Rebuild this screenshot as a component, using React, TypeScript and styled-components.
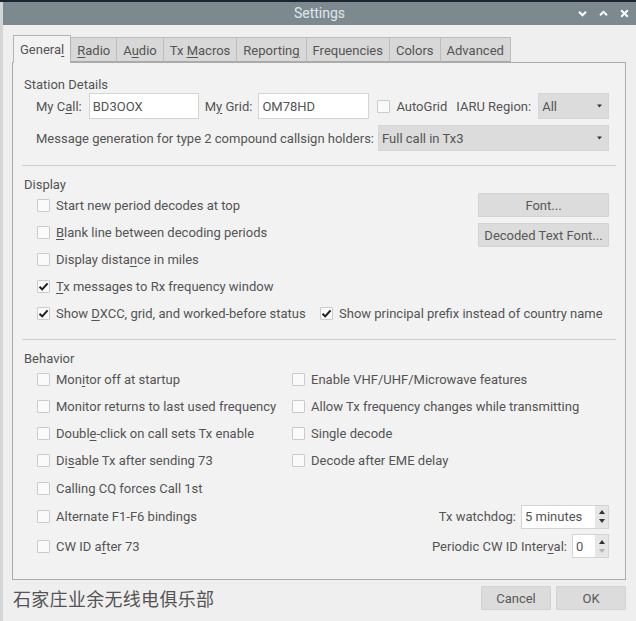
import React from 'react';
import styled, { createGlobalStyle } from 'styled-components';

const Global = createGlobalStyle`
  html, body { margin: 0; padding: 0; background: #d4d6d6; }
  body { font-family: Roboto, "Noto Sans", sans-serif; font-size: 13px; color: #545454; }
  * { box-sizing: border-box; }
  u { text-decoration-thickness: 1px; text-underline-offset: 2px; }
`;

const Desktop = styled.div`
  width: 636px;
  height: 621px;
  overflow: hidden;
  border-top: 2px solid #1c2431;
  padding-left: 3px;
  background: #d4d6d6;
`;

const Window = styled.div`
  height: 619px;
  background: #efefef;
  display: flex;
  flex-direction: column;
`;

const TitleBar = styled.div`
  height: 23px;
  flex: none;
  background: #7c8a90;
  display: grid;
  grid-template-columns: 1fr auto 1fr;
  align-items: center;
  color: #e0e6e8;
  font-size: 14px;
`;

const TitleText = styled.div`
  grid-column: 2;
  line-height: 23px;
`;

const Controls = styled.div`
  grid-column: 3;
  justify-self: end;
  display: flex;
  align-items: center;
  gap: 12px;
  padding-right: 7px;
`;

const Body = styled.div`
  flex: 1;
  display: flex;
  flex-direction: column;
  padding: 10px 10px 0 9px;
`;

const TabBar = styled.div`
  display: flex;
  align-items: flex-end;
  height: 27px;
  padding-left: 1px;
  position: relative;
  z-index: 1;
`;

const Tab = styled.div<{ $active?: boolean }>`
  height: ${p => (p.$active ? '28px' : '25px')};
  margin-bottom: ${p => (p.$active ? '-1px' : '0')};
  padding: 0 6px;
  display: flex;
  align-items: center;
  justify-content: center;
  white-space: nowrap;
  background: ${p => (p.$active ? '#f2f2f2' : '#d8d8d8')};
  border: 1px solid ${p => (p.$active ? '#b4b4b4' : '#bcbcbc')};
  border-bottom: ${p => (p.$active ? 'none' : '1px solid #aaaaaa')};
  border-left: ${p => (p.$active ? '1px solid #b4b4b4' : 'none')};
  color: #545454;
  padding-top: ${p => (p.$active ? '0' : '1px')};
`;

const Pane = styled.div`
  height: 518px;
  border: 1px solid #ababab;
  background: #f2f2f2;
  padding: 14px 16px 0 11px;
  display: flex;
  flex-direction: column;
`;

const SectionTitle = styled.div<{ $mt?: number }>`
  height: 16px;
  line-height: 16px;
  margin-top: ${p => p.$mt ?? 0}px;
`;

const FieldRow = styled.div<{ $mt?: number }>`
  display: flex;
  align-items: center;
  height: 26px;
  padding-left: 12px;
  margin-top: ${p => p.$mt ?? 0}px;
`;

const Label = styled.span<{ $ml?: number; $mr?: number }>`
  margin-left: ${p => p.$ml ?? 0}px;
  margin-right: ${p => p.$mr ?? 0}px;
  white-space: nowrap;
`;

const TextInput = styled.div<{ $w: number }>`
  width: ${p => p.$w}px;
  height: 26px;
  background: #ffffff;
  border: 1px solid #d4d4d4;
  display: flex;
  align-items: center;
  padding-left: 3px;
`;

const Combo = styled.div<{ $ml?: number }>`
  flex: 1;
  height: 26px;
  margin-left: ${p => p.$ml ?? 0}px;
  background: #dcdcdc;
  border: 1px solid #d6d6d6;
  display: flex;
  align-items: center;
  justify-content: space-between;
  padding: 0 6px 0 3px;
`;

const Separator = styled.div<{ $mt: number }>`
  height: 1px;
  background: #cfcfcf;
  margin: ${p => p.$mt}px -7px 0 -2px;
  flex: none;
`;

const BoxBase = styled.span<{ $ml?: number }>`
  width: 13px;
  height: 13px;
  flex: none;
  border: 1px solid #cbcbcb;
  background: #fafafa;
  border-radius: 1px;
  display: inline-flex;
  align-items: center;
  justify-content: center;
  margin-left: ${p => p.$ml ?? 0}px;
`;

const CheckRow = styled.div<{ $h?: number }>`
  display: flex;
  align-items: center;
  gap: 6px;
  height: ${p => p.$h ?? 27}px;
  white-space: nowrap;
`;

const DisplayGrid = styled.div`
  display: grid;
  grid-template-columns: 1fr 131px;
  margin-top: -1px;
  padding-left: 13px;
`;

const Column = styled.div`
  display: flex;
  flex-direction: column;
`;

const ButtonStack = styled.div`
  display: flex;
  flex-direction: column;
  gap: 6px;
  padding-top: 1px;
`;

const PushButton = styled.div<{ $w?: number }>`
  height: 24px;
  width: ${p => (p.$w ? `${p.$w}px` : 'auto')};
  background: #dcdcdc;
  border: 1px solid #d2d2d2;
  border-radius: 1px;
  display: flex;
  align-items: center;
  justify-content: center;
  color: #585858;
`;

const PairRow = styled.div`
  display: grid;
  grid-template-columns: 283px 1fr;
  padding-left: 13px;
`;

const BehaviorGrid = styled.div`
  display: grid;
  grid-template-columns: 255px 1fr;
  grid-template-rows: 27px 27px 27px 27px 28px 29px 30px;
  margin-top: -1px;
  padding-left: 13px;
`;

const SpinCell = styled.div`
  display: flex;
  align-items: center;
  justify-content: flex-end;
  gap: 5px;
`;

const Spin = styled.div<{ $w: number }>`
  width: ${p => p.$w}px;
  height: 24px;
  display: flex;
  border: 1px solid #d4d4d4;
  background: #ffffff;
`;

const SpinValue = styled.div`
  flex: 1;
  display: flex;
  align-items: center;
  padding-left: 3px;
`;

const SpinArrows = styled.div`
  width: 13px;
  background: #e6e6e6;
  display: flex;
  flex-direction: column;
  align-items: center;
  justify-content: space-around;
  padding: 2px 0;
`;

const Footer = styled.div`
  height: 41px;
  display: flex;
  align-items: center;
  justify-content: space-between;
  padding-bottom: 5px;
`;

const ClubName = styled.div`
  font-family: "Noto Sans CJK SC", "Noto Sans", sans-serif;
  font-size: 18px;
  color: #545454;
  padding-left: 1px;
  letter-spacing: 0.3px;
`;

const FooterButtons = styled.div`
  display: flex;
  gap: 5px;
`;

const CheckMark = () => (
  <svg width="11" height="11" viewBox="0 0 11 11">
    <path d="M1.5 5.8 L4.2 8.4 L9.6 2.4" fill="none" stroke="#1e1e1e" strokeWidth="2" />
  </svg>
);

const Box = ({ checked, ml }: { checked?: boolean; ml?: number }) => (
  <BoxBase $ml={ml}>{checked && <CheckMark />}</BoxBase>
);

const Check = ({ checked, children, h }: { checked?: boolean; children: React.ReactNode; h?: number }) => (
  <CheckRow $h={h}>
    <Box checked={checked} />
    <span>{children}</span>
  </CheckRow>
);

const DropArrow = () => (
  <svg width="5" height="4" viewBox="0 0 5 4">
    <path d="M0 0.5 L5 0.5 L2.5 3.5 Z" fill="#333" />
  </svg>
);

const SpinUp = ({ dim }: { dim?: boolean }) => (
  <svg width="6" height="4" viewBox="0 0 6 4">
    <path d="M0 4 L6 4 L3 0 Z" fill={dim ? '#aaa' : '#333'} />
  </svg>
);
const SpinDown = ({ dim }: { dim?: boolean }) => (
  <svg width="6" height="4" viewBox="0 0 6 4">
    <path d="M0 0 L6 0 L3 4 Z" fill={dim ? '#b4b4b4' : '#333'} />
  </svg>
);

const WinIcon = ({ kind }: { kind: 'down' | 'up' | 'close' }) => (
  <svg width="9" height="9" viewBox="0 0 9 9">
    {kind === 'down' && <path d="M1 2.8 L4.5 6.3 L8 2.8" fill="none" stroke="#ffffff" strokeWidth="2" />}
    {kind === 'up' && <path d="M1 6.3 L4.5 2.8 L8 6.3" fill="none" stroke="#ffffff" strokeWidth="2" />}
    {kind === 'close' && <path d="M1.2 1.2 L7.8 7.8 M7.8 1.2 L1.2 7.8" fill="none" stroke="#ffffff" strokeWidth="2" />}
  </svg>
);

const tabs: { label: React.ReactNode; active?: boolean }[] = [
  { label: <>Genera<u>l</u></>, active: true },
  { label: <><u>R</u>adio</> },
  { label: <>A<u>u</u>dio</> },
  { label: <>Tx <u>M</u>acros</> },
  { label: <>Reportin<u>g</u></> },
  { label: <>Frequencies</> },
  { label: <>Colors</> },
  { label: <>Advanced</> },
];

export default function App() {
  return (
    <>
      <Global />
      <Desktop>
        <Window>
          <TitleBar>
            <TitleText>Settings</TitleText>
            <Controls>
              <WinIcon kind="down" />
              <WinIcon kind="up" />
              <WinIcon kind="close" />
            </Controls>
          </TitleBar>
          <Body>
            <TabBar>
              {tabs.map((t, i) => (
                <Tab key={i} $active={t.active}>
                  <span>{t.label}</span>
                </Tab>
              ))}
            </TabBar>
            <Pane>
              <SectionTitle>Station Details</SectionTitle>
              <FieldRow>
                <Label $mr={7}>My C<u>a</u>ll:</Label>
                <TextInput $w={110}>BD3OOX</TextInput>
                <Label $ml={6} $mr={6}>M<u>y</u> Grid:</Label>
                <TextInput $w={111}>OM78HD</TextInput>
                <Box ml={8} />
                <Label $ml={6}>AutoGrid</Label>
                <Label $ml={9}>IARU Region:</Label>
                <Combo $ml={7}>
                  <span>All</span>
                  <DropArrow />
                </Combo>
              </FieldRow>
              <FieldRow $mt={6}>
                <Label>Message generation for type 2 compound callsign holders:</Label>
                <Combo $ml={4}>
                  <span>Full call in Tx3</span>
                  <DropArrow />
                </Combo>
              </FieldRow>
              <Separator $mt={14} />

              <SectionTitle $mt={11}>Display</SectionTitle>
              <DisplayGrid>
                <Column>
                  <Check>Start new period decodes at top</Check>
                  <Check><u>B</u>lank line between decoding periods</Check>
                  <Check>Display dista<u>n</u>ce in miles</Check>
                  <Check checked><u>T</u>x messages to Rx frequency window</Check>
                </Column>
                <ButtonStack>
                  <PushButton>Font...</PushButton>
                  <PushButton>Decoded Text Font...</PushButton>
                </ButtonStack>
              </DisplayGrid>
              <PairRow>
                <Check checked>Show <u>D</u>XCC, grid, and worked-before status</Check>
                <Check checked>Show principal prefix instead of country name</Check>
              </PairRow>
              <Separator $mt={12} />

              <SectionTitle $mt={11}>Behavior</SectionTitle>
              <BehaviorGrid>
                <Check>Mon<u>i</u>tor off at startup</Check>
                <Check>Enable VHF/UHF/Microwave features</Check>
                <Check>Monitor returns to last used frequency</Check>
                <Check>Allow Tx frequency changes while transmitting</Check>
                <Check>Doubl<u>e</u>-click on call sets Tx enable</Check>
                <Check>Single decode</Check>
                <Check>Di<u>s</u>able Tx after sending 73</Check>
                <Check>Decode after EME delay</Check>
                <Check h={28}>Calling CQ forces Call 1st</Check>
                <span />
                <Check h={29}>Alternate F1-F6 bindings</Check>
                <SpinCell>
                  <Label>Tx watchdog:</Label>
                  <Spin $w={88}>
                    <SpinValue>5 minutes</SpinValue>
                    <SpinArrows>
                      <SpinUp />
                      <SpinDown />
                    </SpinArrows>
                  </Spin>
                </SpinCell>
                <Check h={30}>CW ID a<u>f</u>ter 73</Check>
                <SpinCell>
                  <Label>Periodic CW ID Inter<u>v</u>al:</Label>
                  <Spin $w={37}>
                    <SpinValue>0</SpinValue>
                    <SpinArrows>
                      <SpinUp />
                      <SpinDown dim />
                    </SpinArrows>
                  </Spin>
                </SpinCell>
              </BehaviorGrid>
            </Pane>
            <Footer>
              <ClubName>石家庄业余无线电俱乐部</ClubName>
              <FooterButtons>
                <PushButton $w={70}>Cancel</PushButton>
                <PushButton $w={70}>OK</PushButton>
              </FooterButtons>
            </Footer>
          </Body>
        </Window>
      </Desktop>
    </>
  );
}
